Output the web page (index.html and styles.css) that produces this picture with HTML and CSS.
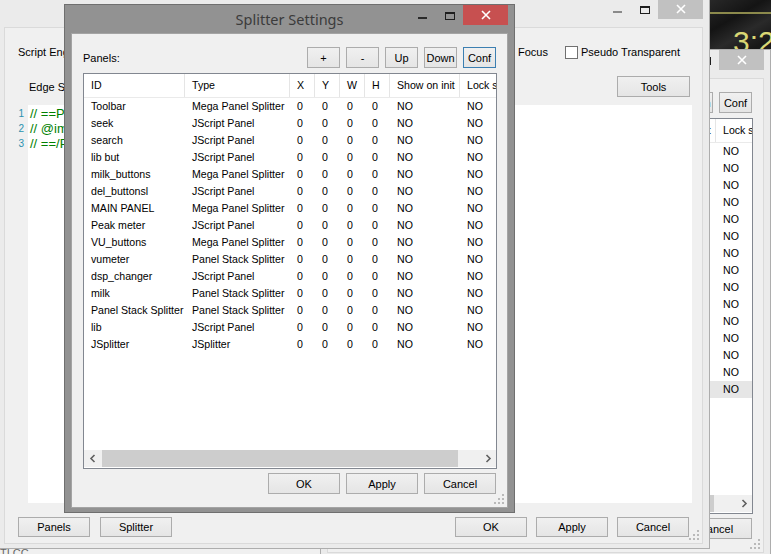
FILE: index.html
```html
<!DOCTYPE html>
<html>

<head>
    <title>Splitter Settings</title>
    <link rel="stylesheet" href="styles.css">
</head>

<body>
    <div id="desktop">
        <!-- skin window peeking out top right -->
        <div class="wallpaper">
            <span class="clock-top">22:14</span>
            <span class="wall-line"></span>
            <span class="clock">3:25</span>
        </div>
        <div class="strip-text">TI CC</div>

        <!-- older splitter settings window, behind -->
        <div class="win dialog back-dialog">
            <div class="titlebar">
                <span class="title">Splitter Settings</span>
                <div class="caps">
                    <span class="cap cap-min"><i></i></span>
                    <span class="cap cap-max"><i></i></span>
                    <span class="cap cap-close"><svg width="10" height="10" viewBox="0 0 10 10"><path d="M1 1L9 9M9 1L1 9" stroke="#fff" stroke-width="1.6" /></svg></span>
                </div>
            </div>
            <div class="client dlg-client">
                <div class="dlg-toolbar">
                    <span class="label">Panels:</span>
                    <div class="tool-btns">
                        <button class="btn btn-sq">+</button>
                        <button class="btn btn-sq">-</button>
                        <button class="btn btn-sq">Up</button>
                        <button class="btn btn-sq">Down</button>
                        <button class="btn btn-sq">Conf</button>
                    </div>
                </div>
                <div class="listview">
                    <div class="lv-body">
                        <div class="lv-head">
                            <span class="c c-id">ID</span><span class="c c-type">Type</span><span class="c c-n">X</span><span class="c c-n">Y</span><span class="c c-n">W</span><span class="c c-n">H</span><span class="c c-show">Show on init</span><span class="c c-lock">Lock size</span>
                        </div>
                        <div class="lv-row"><span class="c c-id">Toolbar</span><span class="c c-type">Mega Panel Splitter</span><span class="c c-n">0</span><span class="c c-n">0</span><span class="c c-n">0</span><span class="c c-n">0</span><span class="c c-show">NO</span><span class="c c-lock">NO</span></div>
                        <div class="lv-row"><span class="c c-id">seek</span><span class="c c-type">JScript Panel</span><span class="c c-n">0</span><span class="c c-n">0</span><span class="c c-n">0</span><span class="c c-n">0</span><span class="c c-show">NO</span><span class="c c-lock">NO</span></div>
                        <div class="lv-row"><span class="c c-id">search</span><span class="c c-type">JScript Panel</span><span class="c c-n">0</span><span class="c c-n">0</span><span class="c c-n">0</span><span class="c c-n">0</span><span class="c c-show">NO</span><span class="c c-lock">NO</span></div>
                        <div class="lv-row"><span class="c c-id">lib but</span><span class="c c-type">JScript Panel</span><span class="c c-n">0</span><span class="c c-n">0</span><span class="c c-n">0</span><span class="c c-n">0</span><span class="c c-show">NO</span><span class="c c-lock">NO</span></div>
                        <div class="lv-row"><span class="c c-id">milk_buttons</span><span class="c c-type">Mega Panel Splitter</span><span class="c c-n">0</span><span class="c c-n">0</span><span class="c c-n">0</span><span class="c c-n">0</span><span class="c c-show">NO</span><span class="c c-lock">NO</span></div>
                        <div class="lv-row"><span class="c c-id">del_buttonsl</span><span class="c c-type">JScript Panel</span><span class="c c-n">0</span><span class="c c-n">0</span><span class="c c-n">0</span><span class="c c-n">0</span><span class="c c-show">NO</span><span class="c c-lock">NO</span></div>
                        <div class="lv-row"><span class="c c-id">MAIN PANEL</span><span class="c c-type">Mega Panel Splitter</span><span class="c c-n">0</span><span class="c c-n">0</span><span class="c c-n">0</span><span class="c c-n">0</span><span class="c c-show">NO</span><span class="c c-lock">NO</span></div>
                        <div class="lv-row"><span class="c c-id">Peak meter</span><span class="c c-type">JScript Panel</span><span class="c c-n">0</span><span class="c c-n">0</span><span class="c c-n">0</span><span class="c c-n">0</span><span class="c c-show">NO</span><span class="c c-lock">NO</span></div>
                        <div class="lv-row"><span class="c c-id">VU_buttons</span><span class="c c-type">Mega Panel Splitter</span><span class="c c-n">0</span><span class="c c-n">0</span><span class="c c-n">0</span><span class="c c-n">0</span><span class="c c-show">NO</span><span class="c c-lock">NO</span></div>
                        <div class="lv-row"><span class="c c-id">vumeter</span><span class="c c-type">Panel Stack Splitter</span><span class="c c-n">0</span><span class="c c-n">0</span><span class="c c-n">0</span><span class="c c-n">0</span><span class="c c-show">NO</span><span class="c c-lock">NO</span></div>
                        <div class="lv-row"><span class="c c-id">dsp_changer</span><span class="c c-type">JScript Panel</span><span class="c c-n">0</span><span class="c c-n">0</span><span class="c c-n">0</span><span class="c c-n">0</span><span class="c c-show">NO</span><span class="c c-lock">NO</span></div>
                        <div class="lv-row"><span class="c c-id">milk</span><span class="c c-type">Panel Stack Splitter</span><span class="c c-n">0</span><span class="c c-n">0</span><span class="c c-n">0</span><span class="c c-n">0</span><span class="c c-show">NO</span><span class="c c-lock">NO</span></div>
                        <div class="lv-row"><span class="c c-id">Panel Stack Splitter</span><span class="c c-type">Panel Stack Splitter</span><span class="c c-n">0</span><span class="c c-n">0</span><span class="c c-n">0</span><span class="c c-n">0</span><span class="c c-show">NO</span><span class="c c-lock">NO</span></div>
                        <div class="lv-row"><span class="c c-id">lib</span><span class="c c-type">JScript Panel</span><span class="c c-n">0</span><span class="c c-n">0</span><span class="c c-n">0</span><span class="c c-n">0</span><span class="c c-show">NO</span><span class="c c-lock">NO</span></div>
                        <div class="lv-row selected"><span class="c c-id">JSplitter</span><span class="c c-type">JSplitter</span><span class="c c-n">0</span><span class="c c-n">0</span><span class="c c-n">0</span><span class="c c-n">0</span><span class="c c-show">NO</span><span class="c c-lock">NO</span></div>
                    </div>
                    <div class="hscroll">
                        <span class="arrow"><svg width="8" height="9" viewBox="0 0 8 9"><path d="M5.5 1L2 4.5L5.5 8" fill="none" stroke="#606060" stroke-width="1.6" /></svg></span>
                        <span class="track"><span class="thumb"></span></span>
                        <span class="arrow"><svg width="8" height="9" viewBox="0 0 8 9"><path d="M2.5 1L6 4.5L2.5 8" fill="none" stroke="#606060" stroke-width="1.6" /></svg></span>
                    </div>
                </div>
                <div class="dlg-footer">
                    <button class="btn btn-wide">OK</button>
                    <button class="btn btn-wide">Apply</button>
                    <button class="btn btn-wide">Cancel</button>
                </div>
                <svg class="grip" width="10" height="10" viewBox="0 0 10 10"><path d="M8 0h2v2h-2zM8 4h2v2h-2zM4 4h2v2h-2zM8 8h2v2h-2zM4 8h2v2h-2zM0 8h2v2h-2z" fill="#b9b9b9" /></svg>
            </div>
        </div>

        <!-- panel configuration window -->
        <div class="win main-win">
            <div class="titlebar">
                <span class="title">Configure: JScript Panel</span>
                <div class="caps">
                    <span class="cap cap-min"><i></i></span>
                    <span class="cap cap-max"><i></i></span>
                    <span class="cap cap-close"><svg width="10" height="10" viewBox="0 0 10 10"><path d="M1 1L9 9M9 1L1 9" stroke="#fff" stroke-width="1.6" /></svg></span>
                </div>
            </div>
            <div class="client main-client">
                <div class="engine-row">
                    <span>Script Engine:</span>
                    <span class="combo">JScript</span>
                    <div class="checks">
                        <label class="check"><span class="check-box"></span>Grab Focus</label>
                        <label class="check"><span class="check-box"></span>Pseudo Transparent</label>
                    </div>
                </div>
                <div class="edge-row">
                    <span>Edge Style:</span>
                    <span class="combo">None</span>
                    <button class="btn btn-tools">Tools</button>
                </div>
                <div class="editor">
                    <div class="gutter">1<br>2<br>3</div>
                    <div class="code">// ==PREPROCESSOR==
// @import "splitter.js"
// ==/PREPROCESSOR==</div>
                </div>
                <div class="main-footer">
                    <button class="btn btn-wide">Panels</button>
                    <button class="btn btn-wide">Splitter</button>
                    <div class="footer-right">
                        <button class="btn btn-wide">OK</button>
                        <button class="btn btn-wide">Apply</button>
                        <button class="btn btn-wide">Cancel</button>
                    </div>
                </div>
                <svg class="grip" width="10" height="10" viewBox="0 0 10 10"><path d="M8 0h2v2h-2zM8 4h2v2h-2zM4 4h2v2h-2zM8 8h2v2h-2zM4 8h2v2h-2zM0 8h2v2h-2z" fill="#b9b9b9" /></svg>
            </div>
        </div>

        <!-- active splitter settings dialog -->
        <div class="win dialog front-dialog active">
            <div class="titlebar">
                <span class="title">Splitter Settings</span>
                <div class="caps">
                    <span class="cap cap-min"><i></i></span>
                    <span class="cap cap-max"><i></i></span>
                    <span class="cap cap-close"><svg width="10" height="10" viewBox="0 0 10 10"><path d="M1 1L9 9M9 1L1 9" stroke="#fff" stroke-width="1.6" /></svg></span>
                </div>
            </div>
            <div class="client dlg-client">
                <div class="dlg-toolbar">
                    <span class="label">Panels:</span>
                    <div class="tool-btns">
                        <button class="btn btn-sq">+</button>
                        <button class="btn btn-sq">-</button>
                        <button class="btn btn-sq">Up</button>
                        <button class="btn btn-sq">Down</button>
                        <button class="btn btn-sq focus">Conf</button>
                    </div>
                </div>
                <div class="listview">
                    <div class="lv-body">
                        <div class="lv-head">
                            <span class="c c-id">ID</span><span class="c c-type">Type</span><span class="c c-n">X</span><span class="c c-n">Y</span><span class="c c-n">W</span><span class="c c-n">H</span><span class="c c-show">Show on init</span><span class="c c-lock">Lock size</span>
                        </div>
                        <div class="lv-row"><span class="c c-id">Toolbar</span><span class="c c-type">Mega Panel Splitter</span><span class="c c-n">0</span><span class="c c-n">0</span><span class="c c-n">0</span><span class="c c-n">0</span><span class="c c-show">NO</span><span class="c c-lock">NO</span></div>
                        <div class="lv-row"><span class="c c-id">seek</span><span class="c c-type">JScript Panel</span><span class="c c-n">0</span><span class="c c-n">0</span><span class="c c-n">0</span><span class="c c-n">0</span><span class="c c-show">NO</span><span class="c c-lock">NO</span></div>
                        <div class="lv-row"><span class="c c-id">search</span><span class="c c-type">JScript Panel</span><span class="c c-n">0</span><span class="c c-n">0</span><span class="c c-n">0</span><span class="c c-n">0</span><span class="c c-show">NO</span><span class="c c-lock">NO</span></div>
                        <div class="lv-row"><span class="c c-id">lib but</span><span class="c c-type">JScript Panel</span><span class="c c-n">0</span><span class="c c-n">0</span><span class="c c-n">0</span><span class="c c-n">0</span><span class="c c-show">NO</span><span class="c c-lock">NO</span></div>
                        <div class="lv-row"><span class="c c-id">milk_buttons</span><span class="c c-type">Mega Panel Splitter</span><span class="c c-n">0</span><span class="c c-n">0</span><span class="c c-n">0</span><span class="c c-n">0</span><span class="c c-show">NO</span><span class="c c-lock">NO</span></div>
                        <div class="lv-row"><span class="c c-id">del_buttonsl</span><span class="c c-type">JScript Panel</span><span class="c c-n">0</span><span class="c c-n">0</span><span class="c c-n">0</span><span class="c c-n">0</span><span class="c c-show">NO</span><span class="c c-lock">NO</span></div>
                        <div class="lv-row"><span class="c c-id">MAIN PANEL</span><span class="c c-type">Mega Panel Splitter</span><span class="c c-n">0</span><span class="c c-n">0</span><span class="c c-n">0</span><span class="c c-n">0</span><span class="c c-show">NO</span><span class="c c-lock">NO</span></div>
                        <div class="lv-row"><span class="c c-id">Peak meter</span><span class="c c-type">JScript Panel</span><span class="c c-n">0</span><span class="c c-n">0</span><span class="c c-n">0</span><span class="c c-n">0</span><span class="c c-show">NO</span><span class="c c-lock">NO</span></div>
                        <div class="lv-row"><span class="c c-id">VU_buttons</span><span class="c c-type">Mega Panel Splitter</span><span class="c c-n">0</span><span class="c c-n">0</span><span class="c c-n">0</span><span class="c c-n">0</span><span class="c c-show">NO</span><span class="c c-lock">NO</span></div>
                        <div class="lv-row"><span class="c c-id">vumeter</span><span class="c c-type">Panel Stack Splitter</span><span class="c c-n">0</span><span class="c c-n">0</span><span class="c c-n">0</span><span class="c c-n">0</span><span class="c c-show">NO</span><span class="c c-lock">NO</span></div>
                        <div class="lv-row"><span class="c c-id">dsp_changer</span><span class="c c-type">JScript Panel</span><span class="c c-n">0</span><span class="c c-n">0</span><span class="c c-n">0</span><span class="c c-n">0</span><span class="c c-show">NO</span><span class="c c-lock">NO</span></div>
                        <div class="lv-row"><span class="c c-id">milk</span><span class="c c-type">Panel Stack Splitter</span><span class="c c-n">0</span><span class="c c-n">0</span><span class="c c-n">0</span><span class="c c-n">0</span><span class="c c-show">NO</span><span class="c c-lock">NO</span></div>
                        <div class="lv-row"><span class="c c-id">Panel Stack Splitter</span><span class="c c-type">Panel Stack Splitter</span><span class="c c-n">0</span><span class="c c-n">0</span><span class="c c-n">0</span><span class="c c-n">0</span><span class="c c-show">NO</span><span class="c c-lock">NO</span></div>
                        <div class="lv-row"><span class="c c-id">lib</span><span class="c c-type">JScript Panel</span><span class="c c-n">0</span><span class="c c-n">0</span><span class="c c-n">0</span><span class="c c-n">0</span><span class="c c-show">NO</span><span class="c c-lock">NO</span></div>
                        <div class="lv-row"><span class="c c-id">JSplitter</span><span class="c c-type">JSplitter</span><span class="c c-n">0</span><span class="c c-n">0</span><span class="c c-n">0</span><span class="c c-n">0</span><span class="c c-show">NO</span><span class="c c-lock">NO</span></div>
                    </div>
                    <div class="hscroll">
                        <span class="arrow"><svg width="8" height="9" viewBox="0 0 8 9"><path d="M5.5 1L2 4.5L5.5 8" fill="none" stroke="#606060" stroke-width="1.6" /></svg></span>
                        <span class="track"><span class="thumb"></span></span>
                        <span class="arrow"><svg width="8" height="9" viewBox="0 0 8 9"><path d="M2.5 1L6 4.5L2.5 8" fill="none" stroke="#606060" stroke-width="1.6" /></svg></span>
                    </div>
                </div>
                <div class="dlg-footer">
                    <button class="btn btn-wide">OK</button>
                    <button class="btn btn-wide">Apply</button>
                    <button class="btn btn-wide">Cancel</button>
                </div>
                <svg class="grip" width="10" height="10" viewBox="0 0 10 10"><path d="M8 0h2v2h-2zM8 4h2v2h-2zM4 4h2v2h-2zM8 8h2v2h-2zM4 8h2v2h-2zM0 8h2v2h-2z" fill="#b9b9b9" /></svg>
            </div>
        </div>
    </div>
</body>

</html>
```

FILE: styles.css
```css
* {
    box-sizing: border-box;
}

body {
    margin: 0;
    background: #f0f0f0;
    font-family: "Liberation Sans", Arial, sans-serif;
    font-size: 11px;
    color: #000;
}

#desktop {
    position: relative;
    width: 771px;
    height: 554px;
    overflow: hidden;
    background: #f0f0f0;
}

/* stuff behind the windows */
.wallpaper {
    position: absolute;
    left: 700px;
    top: 0;
    width: 80px;
    height: 60px;
    overflow: hidden;
    background: linear-gradient(150deg, #2c2c2c 0%, #141414 35%, #2a2a2a 55%, #171717 75%, #262626 100%);
}

.wall-line {
    position: absolute;
    left: 0;
    right: 0;
    top: 12px;
    height: 2px;
    background: #8c8a4c;
}

.clock {
    position: absolute;
    left: 33px;
    top: 27px;
    font-size: 30px;
    line-height: 1;
    color: #d9d774;
}

.clock-top {
    position: absolute;
    left: 38px;
    top: -26px;
    font-size: 30px;
    line-height: 1;
    color: #e8e8e8;
}

.strip-text {
    position: absolute;
    left: 0;
    top: 547px;
    color: #666;
    font-size: 11px;
}

/* windows */
.win {
    position: absolute;
    display: flex;
    flex-direction: column;
    padding: 0 7px 5px 7px;
    background: #ebebeb;
    border: 1px solid #adadad;
}

.main-win {
    left: -3px;
    top: -2px;
    width: 713px;
    height: 551px;
}

.dialog {
    width: 451px;
    height: 509px;
}

.front-dialog {
    left: 64px;
    top: 4px;
}

.back-dialog {
    left: 320px;
    top: 49px;
}

.win.active {
    background: #929292;
    border-color: #6f6f6f;
}

.titlebar {
    position: relative;
    flex: none;
    height: 29px;
    text-align: center;
}

.title {
    line-height: 29px;
    font-family: "Noto Sans", "Open Sans", sans-serif;
    font-size: 14.5px;
    color: #3b3b3b;
}

.caps {
    position: absolute;
    top: 0;
    right: -1px;
    display: flex;
}

.cap {
    position: relative;
    height: 20px;
}

.cap-min {
    width: 26px;
}

.cap-min i {
    position: absolute;
    left: 8px;
    top: 12px;
    width: 9px;
    height: 2px;
    background: #8a8a8a;
}

.active .cap-min i {
    background: #2a2a2a;
}

.cap-max {
    width: 27px;
}

.cap-max i {
    position: absolute;
    left: 9px;
    top: 7px;
    width: 10px;
    height: 8px;
    border: 1px solid #1e1e1e;
    border-top-width: 2px;
}

.cap-close {
    width: 45px;
    display: flex;
    align-items: center;
    justify-content: center;
    background: #c1c1c1;
}

.active .cap-close {
    background: #c75050;
}

.client {
    position: relative;
    flex: 1;
    display: flex;
    flex-direction: column;
    background: #f0f0f0;
    box-shadow: 0 0 0 1px #dadada;
}

.active .client {
    box-shadow: 0 0 0 1px #a4a4a4;
}

.grip {
    position: absolute;
    right: 3px;
    bottom: 3px;
}

/* buttons */
.btn {
    padding: 0;
    height: 21px;
    font-family: "Liberation Sans", Arial, sans-serif;
    font-size: 11px;
    color: #000;
    border: 1px solid #acacac;
    background: linear-gradient(#f0f0f0, #e5e5e5);
}

.btn.focus {
    border-color: #3c7fb1;
}

.btn-sq {
    width: 33px;
}

.btn-wide {
    width: 72px;
}

/* dialog contents */
.dlg-client {
    padding: 13px 11px 0 11px;
}

.dlg-toolbar {
    display: flex;
    align-items: center;
    height: 21px;
}

.dlg-toolbar .label {
    flex: 1;
}

.tool-btns {
    display: flex;
    gap: 6px;
}

.listview {
    margin-top: 5px;
    width: 414px;
    height: 396px;
    display: flex;
    flex-direction: column;
    border: 1px solid #828790;
    background: #fff;
    font-size: 10.6px;
}

.lv-body {
    flex: 1;
    overflow: hidden;
}

.lv-head,
.lv-row {
    display: flex;
    width: 520px;
}

.lv-head {
    height: 24px;
    align-items: center;
    border-bottom: 1px solid #eaeaea;
}

.lv-head .c {
    height: 100%;
    line-height: 23px;
    border-right: 1px solid #e5e5e5;
}

.lv-row {
    height: 17px;
    line-height: 17px;
}

.lv-row.selected {
    background: #e6e6e6;
}

.c {
    flex: none;
    padding-left: 7px;
    white-space: nowrap;
    overflow: hidden;
}

.c-id {
    width: 101px;
}

.c-type {
    width: 105px;
}

.c-n {
    width: 25px;
}

.c-show {
    width: 70px;
}

.c-lock {
    width: 120px;
}

.hscroll {
    flex: none;
    display: flex;
    height: 17px;
    margin-bottom: 1px;
    background: #f0f0f0;
}

.arrow {
    width: 17px;
    display: flex;
    align-items: center;
    justify-content: center;
}

.track {
    flex: 1;
    display: flex;
}

.thumb {
    width: 356px;
    margin-left: 1px;
    background: #cdcdcd;
}

.dlg-footer {
    margin-top: 4px;
    display: flex;
    justify-content: flex-end;
    gap: 6px;
}

/* configure window contents */
.main-client {
    padding: 0 10px 0 8px;
}

.engine-row {
    height: 48px;
    display: flex;
    align-items: center;
    padding: 0 12px 0 5px;
}

.combo {
    margin-left: 10px;
    width: 120px;
    height: 21px;
    line-height: 19px;
    padding-left: 4px;
    border: 1px solid #acacac;
    background: #fff;
}

.checks {
    margin-left: auto;
    display: flex;
    gap: 17px;
}

.check {
    display: flex;
    align-items: center;
    gap: 3px;
}

.check-box {
    width: 13px;
    height: 13px;
    border: 1px solid #707070;
    background: #fff;
}

.edge-row {
    height: 21px;
    display: flex;
    align-items: center;
    padding: 0 2px 0 16px;
}

.btn-tools {
    margin-left: auto;
    width: 73px;
}

.editor {
    margin-top: 8px;
    height: 398px;
    display: flex;
}

.gutter {
    width: 15px;
    padding: 1px 4px 0 0;
    text-align: right;
    font-size: 10px;
    line-height: 15px;
    color: #2b91af;
}

.code {
    flex: 1;
    padding: 1px 2px;
    background: #fff;
    color: #008000;
    font-size: 13px;
    line-height: 15px;
    white-space: pre;
    overflow: hidden;
}

.main-footer {
    margin-top: 14px;
    display: flex;
    gap: 10px;
    padding: 0 3px 0 5px;
}

.main-footer .btn {
    height: 20px;
}

.footer-right {
    margin-left: auto;
    display: flex;
    gap: 9px;
}
```
